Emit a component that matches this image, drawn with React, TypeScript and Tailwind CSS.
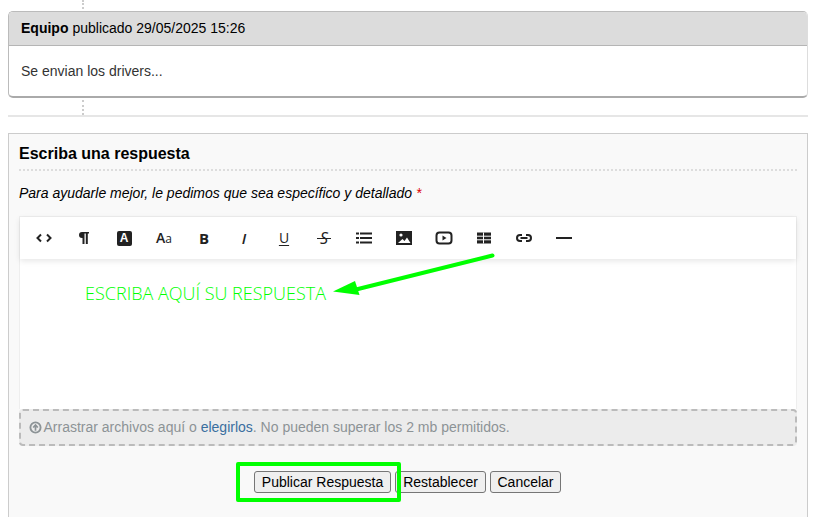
const C = "#222";

function Tool({ children }: { children: React.ReactNode }) {
  return <div className="w-10 h-[42px] flex items-center justify-center shrink-0">{children}</div>;
}

function Icon({ children }: { children: React.ReactNode }) {
  return (
    <svg width="18" height="18" viewBox="0 0 18 18" fill="none">
      {children}
    </svg>
  );
}

function Toolbar() {
  return (
    <div className="h-[42px] flex pl-1 bg-white shadow-[0_2px_6px_rgba(0,0,0,0.1)] relative">
      <Tool>
        <Icon>
          <path d="M6 5.500 2.500 9 6 12.500M12 5.500 15.500 9 12 12.500" stroke={C} strokeWidth="2" />
        </Icon>
      </Tool>
      <Tool>
        <Icon>
          <path d="M7.500 15V9H7A3 3 0 0 1 7 3h7v1.600h-1.200V15h-2V4.600H9.500V15z" fill={C} />
        </Icon>
      </Tool>
      <Tool>
        <div className="w-[15px] h-[15px] rounded-[2px] bg-[#222] flex items-center justify-center text-white text-[12px] font-bold leading-none">A</div>
      </Tool>
      <Tool>
        <span className="text-[#222] leading-none font-['Open_Sans',sans-serif]">
          <span className="text-[14px] font-semibold">A</span>
          <span className="text-[12px]">a</span>
        </span>
      </Tool>
      <Tool>
        <span className="text-[#222] text-[15px] font-bold leading-none font-['Open_Sans',sans-serif]">B</span>
      </Tool>
      <Tool>
        <span className="text-[#222] text-[15px] italic font-semibold leading-none font-['Open_Sans',sans-serif]">I</span>
      </Tool>
      <Tool>
        <span className="text-[#222] text-[14px] underline underline-offset-2 leading-none font-['Open_Sans',sans-serif]">U</span>
      </Tool>
      <Tool>
        <span className="relative text-[#222] text-[16px] italic leading-none font-['Open_Sans',sans-serif]">
          S<span className="absolute left-[-3px] right-[-3px] top-[8px] h-[1px] bg-[#222]" />
        </span>
      </Tool>
      <Tool>
        <Icon>
          <path d="M5 4.500h12M5 9h12M5 13.500h12" stroke={C} strokeWidth="2" />
          <path d="M1 4.500h3M1 9h3M1 13.500h3" stroke={C} strokeWidth="2" />
        </Icon>
      </Tool>
      <Tool>
        <Icon>
          <rect x="1" y="2" width="16" height="14" fill={C} />
          <circle cx="6" cy="6" r="1.600" fill="#fff" />
          <path d="M3 14 7.500 10l2 2 2.500-3.500 3.500 5.500z" fill="#fff" />
        </Icon>
      </Tool>
      <Tool>
        <Icon>
          <rect x="1.500" y="3.500" width="15" height="11" rx="3" stroke={C} strokeWidth="2" />
          <path d="M7.500 6.500 11.500 9l-4 2.500z" fill={C} />
        </Icon>
      </Tool>
      <Tool>
        <Icon>
          <path d="M2 3.500h14v11H2z" fill={C} />
          <path d="M2 7.200h14M2 10.800h14M8.500 3.500v11" stroke="#fff" strokeWidth="1" />
        </Icon>
      </Tool>
      <Tool>
        <Icon>
          <path d="M7 6H5a3 3 0 0 0 0 6h2M11 6h2a3 3 0 0 1 0 6h-2M5.500 9h7" stroke={C} strokeWidth="2" />
        </Icon>
      </Tool>
      <Tool>
        <Icon>
          <path d="M1 9h16" stroke={C} strokeWidth="2" />
        </Icon>
      </Tool>
    </div>
  );
}

export default function App() {
  return (
    <div className="relative w-[823px] h-[517px] overflow-hidden bg-white font-['Liberation_Sans',Arial,sans-serif] text-[14px] text-[#333]">
      <div className="w-[800px] ml-2 pt-[11px]">
        <div className="h-[87px] rounded-[5px] border border-[#bbb] border-b-2 border-b-[#aaa] border-r-[#ddd] bg-white overflow-hidden">
          <div className="h-[34px] bg-[#dcdcdc] border-b border-[#b5b5b5] px-3 flex items-center text-black">
            <strong className="mr-1">Equipo</strong> publicado 29/05/2025 15:26
          </div>
          <div className="px-3 pt-[17px] leading-[16px] text-[#333]">Se envian los drivers...</div>
        </div>
        <div className="h-[17px]" />
        <div className="h-[2px] bg-[#e6e6e6]" />
        <div className="h-[16px]" />

        <div className="h-[420px] bg-[#f9f9f9] border border-[#ccc] pt-[11px] px-[10px]">
          <h3 className="text-[16px] font-bold text-black leading-[18px]">Escriba una respuesta</h3>
          <div className="mt-[6px] border-t-2 border-dotted border-[#ddd]" />
          <p className="mt-[14px] italic text-black leading-[16px]">
            Para ayudarle mejor, le pedimos que sea específico y detallado <span className="text-[#d00]">*</span>
          </p>
          <div className="mt-[15px] border border-[#eee] border-b-0 bg-white">
            <Toolbar />
            <div className="h-[150px]" />
          </div>
          <div className="h-[37px] bg-[#ececec] border-2 border-dashed border-[#bbb] rounded-[4px] flex items-center pl-2 text-[#8c9396] gap-[1.500px]">
            <svg width="13" height="13" viewBox="0 0 14 14" fill="none">
              <circle cx="7" cy="7" r="5.500" stroke="#8c9396" strokeWidth="2" />
              <path d="M7 10.500V5M4.500 7 7 4.300 9.500 7" stroke="#8c9396" strokeWidth="1.800" />
            </svg>
            <span>
              Arrastrar archivos aquí o <span className="text-[#3a6f9f]">elegirlos</span>. No pueden superar los 2 mb permitidos.
            </span>
          </div>
          <div className="mt-[25px] flex justify-center gap-1 pr-[1px]">
            <button className="h-[22px] w-[137px] bg-[#efefef] border border-[#767676] rounded-[3px] text-black text-[14px]">Publicar Respuesta</button>
            <button className="h-[22px] w-[91px] bg-[#efefef] border border-[#767676] rounded-[3px] text-black text-[14px]">Restablecer</button>
            <button className="h-[22px] w-[71px] bg-[#efefef] border border-[#767676] rounded-[3px] text-black text-[14px]">Cancelar</button>
          </div>
        </div>
      </div>

      <div className="absolute left-[82px] top-0 h-[9px] border-l-2 border-dotted border-[#ccc]" />
      <div className="absolute left-[82px] top-[100px] h-[15px] border-l-2 border-dotted border-[#ccc]" />

      <span className="absolute left-[85px] top-[281px] text-[#00ff00] text-[18px] leading-[24px] font-['Open_Sans',sans-serif] font-light whitespace-nowrap">ESCRIBA AQUÍ SU RESPUESTA</span>

      <svg className="absolute left-[330px] top-[250px]" width="170" height="50" viewBox="0 0 170 50" fill="none">
        <path d="M162.500 5.500 20 41" stroke="#00ff00" strokeWidth="4" strokeLinecap="round" />
        <path d="M3 41.500 25 31l4.500 14z" fill="#00ff00" />
      </svg>

      <div className="absolute left-[236px] top-[462px] w-[165px] h-[40px] border-[4px] border-[#00ff00] rounded-[2px]" />
    </div>
  );
}
